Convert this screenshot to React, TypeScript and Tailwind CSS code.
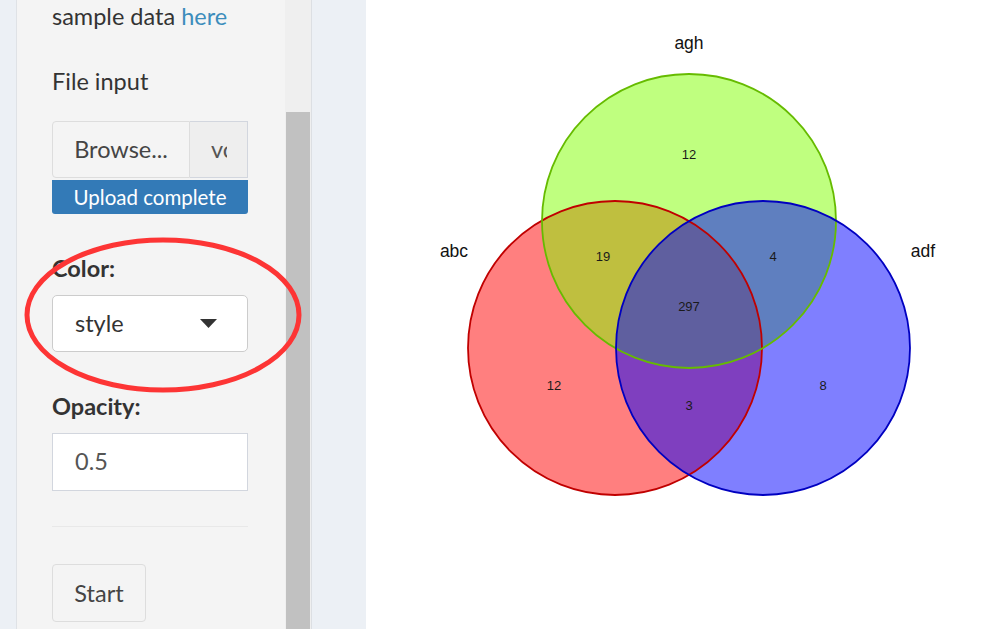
import React from "react";

const font = { fontFamily: '"Lato", "Noto Sans", sans-serif' };

const Sidebar = () => {
	return (
		<div className="flex h-full w-[366px] shrink-0 bg-[#ecf0f5] pl-[16px]">
			{/* Well panel */}
			<div className="h-full w-[269px] border-l border-[#dfe2e6] bg-[#f4f4f4] pl-[35px] pr-[37px] text-[23.5px] text-[#333]">
				<div className="mt-[2px] h-[28px] leading-[28px] whitespace-nowrap">
					sample data <a className="text-[#3c8dbc]">here</a>
				</div>

				<div className="mt-[37px] h-[28px] leading-[28px]">File input</div>

				{/* File input */}
				<div className="mt-[26px] flex h-[57px] w-[196px]">
					<div className="flex w-[138px] items-center justify-center rounded-l-[4px] border border-[#dddddd] bg-[#f4f4f4] text-[#444]">
						Browse...
					</div>
					<div className="flex w-[58px] items-center overflow-hidden border border-l-0 border-[#d2d6de] bg-[#eeeeee] pl-[21px]">
						<span className="w-[16px] overflow-hidden whitespace-nowrap text-[#555]">vcf</span>
					</div>
				</div>
				<div className="mt-[2px] flex h-[34px] w-[196px] items-center justify-center rounded-b-[3px] bg-[#337ab7] text-[20.5px] text-white">
					Upload complete
				</div>

				<div className="mt-[40px] h-[28px] font-bold leading-[28px]">Color:</div>

				{/* Select */}
				<div className="mt-[13px] flex h-[57px] w-[196px] items-center justify-between rounded-[5px] border border-[#cccccc] bg-white pl-[22px] pr-[30px]">
					<span>style</span>
					<svg width="17" height="9" viewBox="0 0 17 9">
						<path d="M0 0 L17 0 L8.5 9 Z" fill="#333" />
					</svg>
				</div>

				<div className="mt-[40px] h-[28px] font-bold leading-[28px]">Opacity:</div>

				{/* Numeric input */}
				<div className="mt-[13px] flex h-[58px] w-[196px] items-center border border-[#d2d6de] bg-white pl-[22px] text-[#555]">
					0.5
				</div>

				<div className="mt-[35px] h-px w-[196px] bg-[#e8e8e8]" />

				<div className="mt-[37px] flex h-[58px] w-[94px] items-center justify-center rounded-[4px] border border-[#dddddd] bg-[#f4f4f4] pt-[2px] text-[#444]">
					Start
				</div>
			</div>

			{/* Scrollbar */}
			<div className="h-full w-[26px] bg-[#efefef] pt-[112px] pl-[1px]">
				<div className="h-[520px] w-[24px] bg-[#c1c1c1]" />
			</div>
			<div className="h-full w-px bg-[#dcdfe3]" />
		</div>
	);
};

const Venn = () => {
	const r = 147;
	const circles = [
		{ cx: 615, cy: 348, fill: "#ff0000", stroke: "#c00000" },
		{ cx: 689, cy: 221, fill: "#7fff00", stroke: "#66bb00" },
		{ cx: 763, cy: 348, fill: "#0000ff", stroke: "#0000c0" },
	];
	const counts = [
		{ x: 689, y: 154, t: "12" },
		{ x: 603, y: 256, t: "19" },
		{ x: 773, y: 256, t: "4" },
		{ x: 689, y: 306, t: "297" },
		{ x: 554, y: 385, t: "12" },
		{ x: 689, y: 405, t: "3" },
		{ x: 823, y: 385, t: "8" },
	];
	return (
		<div className="h-full flex-1 bg-white">
			<svg width="626" height="629" viewBox="366 0 626 629" style={{ fontFamily: '"Liberation Sans", Arial, sans-serif' }}>
				{circles.map((c, i) => (
					<circle key={i} cx={c.cx} cy={c.cy} r={r} fill={c.fill} fillOpacity={0.5} />
				))}
				{circles.map((c, i) => (
					<circle key={"s" + i} cx={c.cx} cy={c.cy} r={r} fill="none" stroke={c.stroke} strokeWidth={1.8} />
				))}
				{counts.map((c, i) => (
					<text key={i} x={c.x} y={c.y} fontSize="13" textAnchor="middle" dominantBaseline="central" fill="#1a1a1a">
						{c.t}
					</text>
				))}
				<text x={689} y={43} fontSize="17.5" textAnchor="middle" dominantBaseline="central" fill="#111">agh</text>
				<text x={454} y={251} fontSize="17.5" textAnchor="middle" dominantBaseline="central" fill="#111">abc</text>
				<text x={923} y={251} fontSize="17.5" textAnchor="middle" dominantBaseline="central" fill="#111">adf</text>
			</svg>
		</div>
	);
};

export default function App() {
	return (
		<div className="relative flex h-[629px] w-[992px] overflow-hidden" style={font}>
			<Sidebar />
			<Venn />
			{/* Red annotation ellipse */}
			<svg className="pointer-events-none absolute left-0 top-0" width="330" height="420">
				<ellipse cx="163" cy="315" rx="136" ry="75" fill="none" stroke="#fd3535" strokeWidth="5" />
			</svg>
		</div>
	);
}
